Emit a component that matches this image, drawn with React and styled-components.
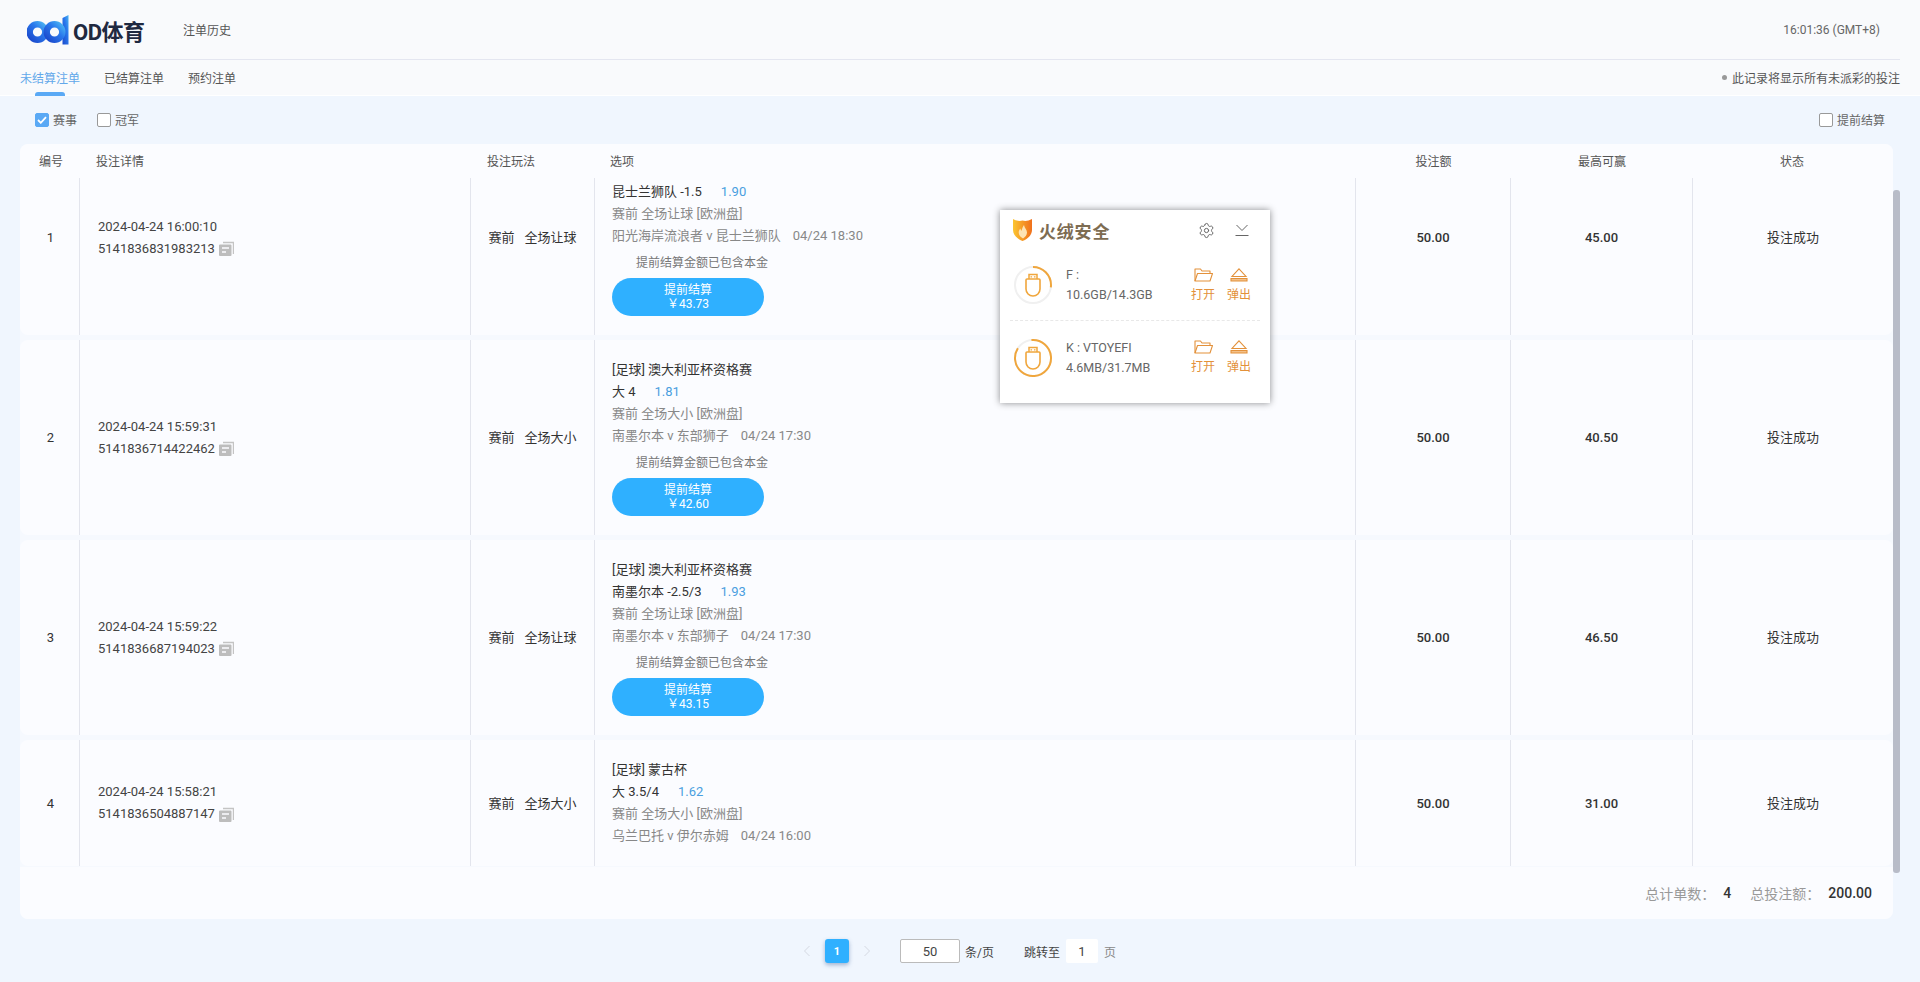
import React from "react";
import styled, { createGlobalStyle } from "styled-components";
import { Settings } from "lucide-react";

const Global = createGlobalStyle`
  html, body { margin: 0; padding: 0; height: 100%; overflow: hidden; }
  body { font-family: Roboto, "Noto Sans CJK SC", sans-serif; font-size: 12px; color: #444; background: #f0f6fe; }
  * { box-sizing: border-box; }
`;

const Page = styled.div`
  position: relative;
  width: 1920px;
  height: 982px;
  background: #f0f6fe;
  overflow: hidden;
`;
const Head = styled.header`
  background: #f9fafc;
  padding: 0 20px;
  height: 96px;
  border-bottom: 1px solid #fff;
`;
const TopBar = styled.div`
  height: 60px;
  display: flex;
  align-items: center;
  border-bottom: 1px solid #e4e6f0;
`;
const Logo = styled.div`
  display: flex;
  align-items: center;
  margin-left: 7px;
  width: 156px;
  height: 30px;
`;
const LogoText = styled.span`
  font-size: 22px;
  font-weight: 700;
  color: #1f2940;
  letter-spacing: -0.5px;
  margin-left: 4px;
  white-space: nowrap;
`;
const TopLink = styled.span`
  color: #555;
`;
const Clock = styled.span`
  margin-left: auto;
  margin-right: 20px;
  color: #666;
`;
const TabBar = styled.div`
  height: 35px;
  display: flex;
  align-items: center;
  gap: 24px;
`;
const Tab = styled.span`
  position: relative;
  color: ${(p) => (p.$active ? "#62a8ea" : "#555")};
  ${(p) =>
    p.$active &&
    `&::after {
      content: "";
      position: absolute;
      left: 15px;
      bottom: -10px;
      width: 30px;
      height: 4px;
      background: #5aa9f5;
      border-radius: 3px 3px 0 0;
    }`}
`;
const Note = styled.span`
  margin-left: auto;
  color: #555;
  display: flex;
  align-items: center;
  gap: 5px;
  &::before {
    content: "";
    width: 5px;
    height: 5px;
    border-radius: 50%;
    background: #999;
  }
`;
const Content = styled.main`
  position: relative;
  width: 1880px;
  margin-left: 20px;
`;
const FilterBar = styled.div`
  width: 1873px;
  height: 48px;
  padding: 0 8px 0 15px;
  display: flex;
  align-items: center;
  gap: 20px;
`;
const Check = styled.label`
  display: flex;
  align-items: center;
  gap: 4px;
  color: #666;
  padding-bottom: 2px;
  ${(p) => p.$right && "margin-left: auto;"}
`;
const Box = styled.span`
  width: 14px;
  height: 14px;
  margin-top: 2px;
  border-radius: 2px;
  display: flex;
  align-items: center;
  justify-content: center;
  background: ${(p) => (p.$on ? "#5aa9f5" : "#fff")};
  border: 1px solid ${(p) => (p.$on ? "#5aa9f5" : "#999")};
`;
const Card = styled.section`
  width: 1873px;
  background: #f6f9fe;
  border-radius: 8px;
`;
const Columns = "60px 391px 124px 761px 155px 182px 200px";
const HeaderRow = styled.div`
  display: grid;
  grid-template-columns: ${Columns};
  height: 34px;
  padding-bottom: 2px;
  align-items: center;
  background: #fbfcff;
  border-radius: 8px 8px 0 0;
  color: #555;
`;
const HeadCell = styled.div`
  text-align: ${(p) => p.$align || "center"};
  padding-left: ${(p) => p.$pad || 0}px;
  padding-right: ${(p) => p.$padRight || 0}px;
`;
const Viewport = styled.div`
  height: 689px;
  overflow: hidden;
`;
const RowList = styled.div`
  display: flex;
  flex-direction: column;
  gap: 5px;
  margin-top: -38px;
`;
const Row = styled.div`
  display: grid;
  grid-template-columns: ${Columns};
  background: #fbfcff;
  border-radius: 8px;
`;
const Cell = styled.div`
  display: flex;
  align-items: center;
  justify-content: center;
  font-size: 13px;
  color: #333;
  font-weight: ${(p) => (p.$strong ? 500 : 400)};
  padding-bottom: ${(p) => (p.$cjk ? 2 : 0)}px;
  ${(p) => !p.$last && "border-right: 1px solid #e3e5ed;"}
`;
const IndexCell = styled(Cell)`
  padding-left: 2px;
`;
const DetailCell = styled(Cell)`
  flex-direction: column;
  align-items: flex-start;
  padding-left: 18px;
  color: #444;
`;
const DetailLine = styled.div`
  height: 22px;
  line-height: 22px;
  display: flex;
  align-items: center;
  gap: 4px;
`;
const PlayCell = styled(Cell)`
  gap: 10px;
`;
const OptionCell = styled(Cell)`
  display: block;
  padding: 19px 0 19px 17px;
`;
const Line = styled.div`
  height: 22px;
  line-height: 22px;
  white-space: nowrap;
  color: ${(p) => (p.$muted ? "#888" : "#333")};
`;
const Odds = styled.span`
  color: #4a9fe0;
  margin-left: 19px;
`;
const DateText = styled.span`
  margin-left: 12px;
`;
const Notice = styled.div`
  height: 31px;
  line-height: 33px;
  padding-left: 24px;
  font-size: 12px;
  color: #777;
`;
const CashBtn = styled.button`
  display: block;
  width: 152px;
  height: 38px;
  padding: 0;
  border: 0;
  border-radius: 19px;
  background: #2fb0ff;
  color: #fff;
  font: 12px/14px Roboto, "Noto Sans CJK SC", sans-serif;
`;
const Footer = styled.div`
  height: 52px;
  background: #fbfcff;
  border-radius: 0 0 8px 8px;
  display: flex;
  align-items: center;
  justify-content: flex-end;
  padding-right: 21px;
  font-size: 14px;
`;
const SumLabel = styled.span`
  color: #999;
  font-size: 14px;
`;
const SumValue = styled.span`
  color: #333;
  font-weight: 500;
  margin-left: 8px;
  margin-right: ${(p) => p.$gap || 0}px;
`;
const Thumb = styled.div`
  position: absolute;
  left: 1873px;
  top: 94px;
  width: 7px;
  height: 683px;
  background: #b8bcc8;
  border-radius: 3px;
`;
const Pager = styled.nav`
  width: 1873px;
  display: flex;
  align-items: center;
  height: 24px;
  margin-top: 20px;
  padding-left: 775px;
  color: #444;
`;
const Chevron = styled.span`
  display: flex;
  width: 24px;
  justify-content: center;
`;
const PageBtn = styled.span`
  width: 24px;
  height: 24px;
  border-radius: 3px;
  background: #2fb0ff;
  box-shadow: 0 2px 4px rgba(40, 80, 140, 0.4);
  color: #fff;
  font-weight: 700;
  font-size: 11px;
  display: flex;
  align-items: center;
  justify-content: center;
  margin: 0 6px;
`;
const SizeBox = styled.span`
  width: 60px;
  height: 24px;
  background: #fff;
  border: 1px solid #bbb;
  border-radius: 2px;
  font-size: 13px;
  display: flex;
  align-items: center;
  justify-content: center;
  margin-left: 21px;
`;
const PagerText = styled.span`
  margin-left: ${(p) => p.$ml || 0}px;
  color: ${(p) => p.$color || "#444"};
`;
const JumpBox = styled.span`
  width: 32px;
  height: 24px;
  background: #fff;
  border-radius: 2px;
  font-size: 13px;
  display: flex;
  align-items: center;
  justify-content: center;
  margin-left: 6px;
`;

const Popup = styled.aside`
  position: absolute;
  left: 1000px;
  top: 210px;
  width: 270px;
  height: 193px;
  background: #fff;
  box-shadow: 0 0 7px rgba(0, 0, 0, 0.45);
  padding: 0 10px;
  font-family: "Noto Sans CJK SC", Roboto, sans-serif;
`;
const PopHead = styled.div`
  height: 40px;
  display: flex;
  align-items: center;
  padding: 0 11px 0 3px;
`;
const PopTitle = styled.span`
  font-size: 17px;
  font-weight: 700;
  color: #7d6c52;
  letter-spacing: 0.8px;
  margin-left: 7px;
`;
const PopTools = styled.div`
  margin-left: auto;
  display: flex;
  align-items: center;
  gap: 20px;
  color: #666;
`;
const Drive = styled.div`
  height: ${(p) => p.$h}px;
  display: flex;
  align-items: center;
  padding: 0 9px 0 3px;
  ${(p) => p.$line && "border-bottom: 1px dashed #e8e8e8;"}
`;
const DriveInfo = styled.div`
  margin-left: 13px;
  font-size: 12.5px;
  line-height: 20px;
  color: #666;
  font-family: Roboto, "Noto Sans CJK SC", sans-serif;
`;
const DriveActions = styled.div`
  margin-left: auto;
  display: flex;
  gap: 12px;
`;
const Action = styled.div`
  display: flex;
  flex-direction: column;
  align-items: center;
  width: 24px;
  font-size: 12px;
  line-height: 18px;
  color: #e3913a;
  gap: 3px;
`;

const CopyIcon = () => (
  <svg width="15" height="15" viewBox="0 0 15 15">
    <path d="M4 1.500h10.500V13" fill="none" stroke="#c4c4c4" strokeWidth="1.400" />
    <path d="M1 3.500h10.500a1 1 0 0 1 1 1V14a1 1 0 0 1-1 1H1a1 1 0 0 1-1-1V4.500a1 1 0 0 1 1-1z" fill="#bdbdbd" />
    <path d="M3 7h7M3 11h4" stroke="#fbfcff" strokeWidth="1.400" />
  </svg>
);

const LogoMark = () => (
  <svg width="42" height="30" viewBox="0 0 42 30" style={{ flex: "none" }}>
    <defs>
      <linearGradient id="lg" x1="0" y1="1" x2="1" y2="0">
        <stop offset="0" stopColor="#1b49cc" />
        <stop offset="0.6" stopColor="#2a78ec" />
        <stop offset="1" stopColor="#4ab2f2" />
      </linearGradient>
    </defs>
    <path d="M35.500 3 41.500 0v29.500h-6z" fill="url(#lg)" />
    <circle cx="10.500" cy="17" r="7.800" fill="none" stroke="url(#lg)" strokeWidth="6.400" />
    <circle cx="27.500" cy="17" r="7.800" fill="none" stroke="url(#lg)" strokeWidth="6.400" />
  </svg>
);

const Shield = () => (
  <svg width="19" height="22" viewBox="0 0 19 22">
    <defs>
      <linearGradient id="sh" x1="0" y1="0" x2="1" y2="0">
        <stop offset="0" stopColor="#fbc531" />
        <stop offset="1" stopColor="#f0701c" />
      </linearGradient>
    </defs>
    <path d="M9.500 1.500C12 2.500 15.500 2 19 0v11c0 5-4.500 9-9.500 11C4.500 20 0 16 0 11V0c3.500 2 7 2.500 9.500 1.500z" fill="url(#sh)" />
    <path d="M11 6c.3 3 3 4.500 3 7.500 0 2.500-1.800 4.500-4 6-2.500-1.300-4.300-3.500-4.300-6 0-1.800.8-3 1.800-4 .1 1.300.4 1.800 1 2.300C9 10 9.500 8 11 6z" fill="#fde3b4" />
  </svg>
);

const Collapse = () => (
  <svg width="14" height="13" viewBox="0 0 14 13" fill="none" stroke="#666" strokeWidth="1">
    <path d="M1.500 1l5.500 5.500L12.500 1M0.500 11.500h13" />
  </svg>
);

const Ring = ({ pct, start }) => {
  const r = 18;
  const c = 2 * Math.PI * r;
  return (
    <svg width="40" height="40" viewBox="0 0 40 40" fill="none">
      <circle cx="20" cy="20" r={r} stroke="#f0f0f0" strokeWidth="2" />
      <circle
        cx="20"
        cy="20"
        r={r}
        stroke="#f0a63c"
        strokeWidth="2"
        strokeDasharray={`${c * pct} ${c}`}
        transform={`rotate(${start} 20 20)`}
      />
      <path d="M16 14V9.500h8V14" stroke="#f0a63c" strokeWidth="1.500" />
      <path d="M14 14h12a1 1 0 0 1 1 1v9a7 7 0 0 1-14 0v-9a1 1 0 0 1 1-1z" stroke="#f0a63c" strokeWidth="1.600" />
      <path d="M17.500 11.800h1.600M20.900 11.800h1.600" stroke="#f0a63c" strokeWidth="1.300" />
    </svg>
  );
};

const FolderIcon = () => (
  <svg width="19" height="14" viewBox="0 0 19 14" fill="none" stroke="#e3913a" strokeWidth="1.100" strokeLinejoin="round">
    <path d="M1 13V1h5.500l1.500 2h8v2.500" />
    <path d="M1 13 3.500 5.500h15L16 13z" />
  </svg>
);

const EjectIcon = () => (
  <svg width="18" height="14" viewBox="0 0 18 14" fill="none" stroke="#e3913a" strokeWidth="1.100">
    <path d="M9 .8 16 8.500H2z" />
    <path d="M1 10.500h16v2.500H1z" fill="#f2c08a" />
  </svg>
);

const ChevronIcon = ({ dir }) => (
  <svg width="8" height="12" viewBox="0 0 8 12" fill="none" stroke="#d5d9e2" strokeWidth="1">
    <path d={dir === "left" ? "M6.500 1 1.500 6l5 5" : "M1.500 1l5 5-5 5"} />
  </svg>
);

const CheckMark = () => (
  <svg width="10" height="8" viewBox="0 0 10 8" fill="none" stroke="#fff" strokeWidth="1.800">
    <path d="M1 4l2.800 2.800L9 1.200" />
  </svg>
);

const bets = [
  { id: 1, time: "2024-04-24 16:00:10", no: "5141836831983213", play: "全场让球", league: "", pick: "昆士兰狮队 -1.5", odds: "1.90", market: "赛前 全场让球 [欧洲盘]", match: "阳光海岸流浪者 v 昆士兰狮队", date: "04/24 18:30", cash: "43.73", win: "45.00" },
  { id: 2, time: "2024-04-24 15:59:31", no: "5141836714422462", play: "全场大小", league: "[足球] 澳大利亚杯资格赛", pick: "大 4", odds: "1.81", market: "赛前 全场大小 [欧洲盘]", match: "南墨尔本 v 东部狮子", date: "04/24 17:30", cash: "42.60", win: "40.50" },
  { id: 3, time: "2024-04-24 15:59:22", no: "5141836687194023", play: "全场让球", league: "[足球] 澳大利亚杯资格赛", pick: "南墨尔本 -2.5/3", odds: "1.93", market: "赛前 全场让球 [欧洲盘]", match: "南墨尔本 v 东部狮子", date: "04/24 17:30", cash: "43.15", win: "46.50" },
  { id: 4, time: "2024-04-24 15:58:21", no: "5141836504887147", play: "全场大小", league: "[足球] 蒙古杯", pick: "大 3.5/4", odds: "1.62", market: "赛前 全场大小 [欧洲盘]", match: "乌兰巴托 v 伊尔赤姆", date: "04/24 16:00", win: "31.00" },
];

const heads = [
  { t: "编号", pad: 2 },
  { t: "投注详情", align: "left", pad: 16 },
  { t: "投注玩法", align: "left", pad: 16 },
  { t: "选项", align: "left", pad: 15 },
  { t: "投注额" },
  { t: "最高可赢" },
  { t: "状态", padRight: 2 },
];

const drives = [
  { name: "F : ", size: "10.6GB/14.3GB", pct: 0.27, start: -90, h: 71, line: true },
  { name: "K : VTOYEFI", size: "4.6MB/31.7MB", pct: 0.85, start: -95, h: 73 },
];

export default function App() {
  return (
    <Page>
      <Global />
      <Head>
        <TopBar>
          <Logo>
            <LogoMark />
            <LogoText>OD体育</LogoText>
          </Logo>
          <TopLink>注单历史</TopLink>
          <Clock>16:01:36 (GMT+8)</Clock>
        </TopBar>
        <TabBar>
          <Tab $active>未结算注单</Tab>
          <Tab>已结算注单</Tab>
          <Tab>预约注单</Tab>
          <Note>此记录将显示所有未派彩的投注</Note>
        </TabBar>
      </Head>
      <Content>
        <FilterBar>
          <Check>
            <Box $on>
              <CheckMark />
            </Box>
            赛事
          </Check>
          <Check>
            <Box />
            冠军
          </Check>
          <Check $right>
            <Box />
            提前结算
          </Check>
        </FilterBar>
        <Card>
          <HeaderRow>
            {heads.map((h) => (
              <HeadCell key={h.t} $align={h.align} $pad={h.pad} $padRight={h.padRight}>
                {h.t}
              </HeadCell>
            ))}
          </HeaderRow>
          <Viewport>
            <RowList>
              {bets.map((b) => (
                <Row key={b.id}>
                  <IndexCell>{b.id}</IndexCell>
                  <DetailCell>
                    <DetailLine>{b.time}</DetailLine>
                    <DetailLine>
                      {b.no}
                      <CopyIcon />
                    </DetailLine>
                  </DetailCell>
                  <PlayCell $cjk>
                    <span>赛前</span>
                    <span>{b.play}</span>
                  </PlayCell>
                  <OptionCell>
                    <Line>{b.league}</Line>
                    <Line>
                      {b.pick}
                      <Odds>{b.odds}</Odds>
                    </Line>
                    <Line $muted>{b.market}</Line>
                    <Line $muted>
                      {b.match}
                      <DateText>{b.date}</DateText>
                    </Line>
                    {b.cash && (
                      <>
                        <Notice>提前结算金额已包含本金</Notice>
                        <CashBtn>
                          提前结算
                          <br />￥{b.cash}
                        </CashBtn>
                      </>
                    )}
                  </OptionCell>
                  <Cell $strong>50.00</Cell>
                  <Cell $strong>{b.win}</Cell>
                  <Cell $last $cjk>投注成功</Cell>
                </Row>
              ))}
            </RowList>
          </Viewport>
          <Footer>
            <SumLabel>总计单数：</SumLabel>
            <SumValue $gap={19}>4</SumValue>
            <SumLabel>总投注额：</SumLabel>
            <SumValue>200.00</SumValue>
          </Footer>
        </Card>
        <Thumb />
        <Pager>
          <Chevron>
            <ChevronIcon dir="left" />
          </Chevron>
          <PageBtn>1</PageBtn>
          <Chevron>
            <ChevronIcon dir="right" />
          </Chevron>
          <SizeBox>50</SizeBox>
          <PagerText $ml={5}>条/页</PagerText>
          <PagerText $ml={30}>跳转至</PagerText>
          <JumpBox>1</JumpBox>
          <PagerText $ml={6} $color="#888">
            页
          </PagerText>
        </Pager>
      </Content>
      <Popup>
        <PopHead>
          <Shield />
          <PopTitle>火绒安全</PopTitle>
          <PopTools>
            <Settings size={17} strokeWidth={1.4} color="#666" />
            <Collapse />
          </PopTools>
        </PopHead>
        {drives.map((d) => (
          <Drive key={d.name} $h={d.h} $line={d.line}>
            <Ring pct={d.pct} start={d.start} />
            <DriveInfo>
              <div>{d.name}</div>
              <div>{d.size}</div>
            </DriveInfo>
            <DriveActions>
              <Action>
                <FolderIcon />
                打开
              </Action>
              <Action>
                <EjectIcon />
                弹出
              </Action>
            </DriveActions>
          </Drive>
        ))}
      </Popup>
    </Page>
  );
}
